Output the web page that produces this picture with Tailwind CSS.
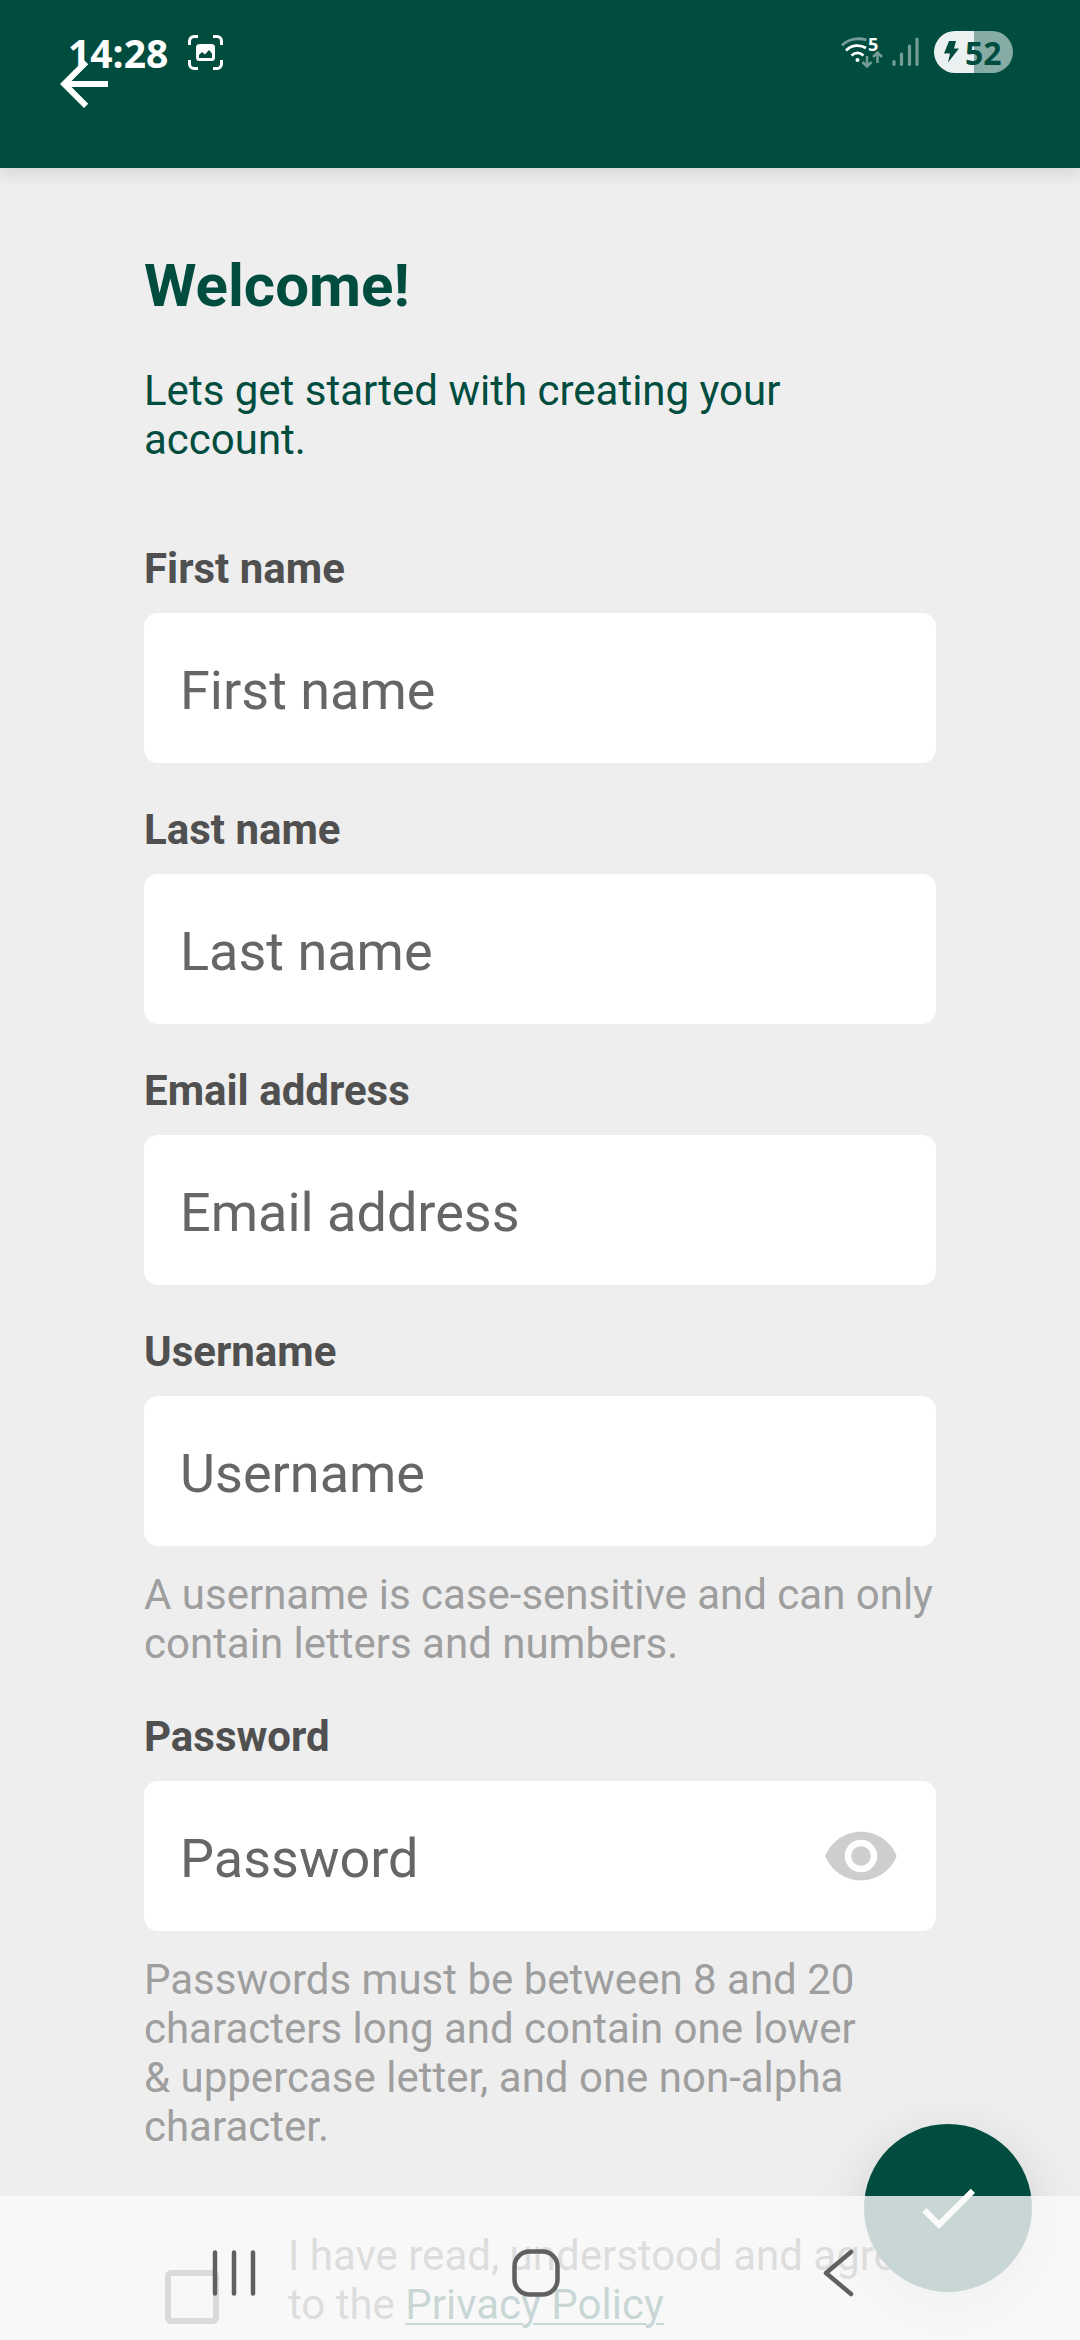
<!DOCTYPE html>
<html lang="en">
<head>
    <meta charset="UTF-8">
    <meta name="viewport" content="width=device-width, initial-scale=1.0">
    <title>Create account</title>
    <script src="https://cdn.jsdelivr.net/npm/@tailwindcss/browser@4"></script>
</head>
<body class="min-h-screen bg-[#eeeeee] font-[Roboto,sans-serif] text-[42px] leading-[49px] text-[#505050]">
    <!-- App bar -->
    <header class="relative flex h-[168px] items-start bg-[#004d40] px-12 pt-12 shadow-[0_4px_18px_rgba(0,0,0,0.12)]">
        <button type="button" aria-label="Back" class="text-white">
            <svg class="size-[72px]" viewBox="0 0 24 24" fill="currentColor"><path d="M20 11H7.83l5.59-5.59L12 4l-8 8 8 8 1.41-1.41L7.83 13H20z"/></svg>
        </button>

        <!-- System status bar, drawn over the app bar -->
        <div class="pointer-events-none absolute inset-x-0 top-0 flex h-[104px] items-center justify-between pl-[68px] pr-[67px] font-['Open_Sans',sans-serif] font-bold text-white">
            <div class="flex items-center gap-5">
                <span class="text-[39px]">14:28</span>
                <svg class="size-[35px]" viewBox="0 0 35 35" fill="none">
                    <path d="M1.5 10V6a4.500 4.500 0 0 1 4.500-4.500h4M25 1.500h4A4.500 4.500 0 0 1 33.500 6v4M33.500 25v4a4.500 4.500 0 0 1-4.500 4.500h-4M10 33.500H6A4.500 4.500 0 0 1 1.500 29v-4" stroke="currentColor" stroke-width="3"/>
                    <rect x="8" y="9" width="19" height="17" rx="3.500" fill="currentColor"/>
                    <path d="M11 23v-3l3-3 3 2.500 4-4.500 3 3.500V23z" fill="#004d40"/>
                </svg>
            </div>
            <div class="flex items-center">
                <!-- Wifi with traffic arrows -->
                <svg class="h-[32px] w-[42px] overflow-visible" viewBox="0 0 42 32" fill="none" stroke="currentColor" stroke-width="2.800">
                    <path d="M1 9.500C8 2.500 18 1.500 25.500 4" opacity=".45"/>
                    <path d="M5 14.500c6-6 14-6 20-2.500M10.500 19.500c4-3.500 8-3.500 12 0"/>
                    <circle cx="16.500" cy="24" r="2" fill="currentColor" stroke="none"/>
                    <path d="M26 20v10M21.500 26l4.500 4.500 4.500-4.500M36.500 27V17M32 21l4.500-4.500L41 21" opacity=".45" stroke-width="2.500"/>
                    <text x="27" y="14.500" font-size="18" font-weight="700" fill="currentColor" stroke="none">5</text>
                </svg>
                <!-- Signal -->
                <svg class="ml-[9px] h-[30px] w-[27px]" viewBox="0 0 27 30" stroke="currentColor" stroke-width="3.200" stroke-linecap="round" opacity=".45">
                    <path d="M2 24.500v3M9.500 17v10.500M17.500 9v18.500M25 2v25.500"/>
                </svg>
                <!-- Battery -->
                <div class="ml-[15px] flex h-[42px] w-[79px] items-center rounded-full bg-linear-to-r from-[#ebf1f0] from-51% to-[#86aca5] to-51% pl-[10px] text-[#004d40]">
                    <svg class="mr-1.5 h-[22px] w-[15px] shrink-0" viewBox="0 0 15 22" fill="currentColor"><path d="M5 0h7L10 7.500h5L4 21.500l2-9H0z"/></svg>
                    <span class="text-[32px]">52</span>
                </div>
            </div>
        </div>
    </header>

    <main class="px-36 pt-[83px]">
        <h1 class="text-[60px] leading-[70px] font-bold text-[#004d40]">Welcome!</h1>
        <p class="mt-[45px] text-[#004d40]">Lets get started with creating your account.</p>

        <form class="mt-20 flex flex-col gap-[42px]">
            <div class="flex flex-col gap-5">
                <label for="first-name" class="font-bold">First name</label>
                <input id="first-name" type="text" placeholder="First name" class="h-[150px] w-full rounded-[14px] bg-white px-9 pt-1 text-[54px] placeholder:text-[#666666]">
            </div>
            <div class="flex flex-col gap-5">
                <label for="last-name" class="font-bold">Last name</label>
                <input id="last-name" type="text" placeholder="Last name" class="h-[150px] w-full rounded-[14px] bg-white px-9 pt-1 text-[54px] placeholder:text-[#666666]">
            </div>
            <div class="flex flex-col gap-5">
                <label for="email" class="font-bold">Email address</label>
                <input id="email" type="email" placeholder="Email address" class="h-[150px] w-full rounded-[14px] bg-white px-9 pt-1 text-[54px] placeholder:text-[#666666]">
            </div>
            <div>
                <label for="username" class="block font-bold">Username</label>
                <input id="username" type="text" placeholder="Username" aria-describedby="username-hint" class="mt-5 h-[150px] w-full rounded-[14px] bg-white px-9 pt-1 text-[54px] placeholder:text-[#666666]">
                <p id="username-hint" class="mt-6 pb-0.5 text-[#9e9e9e]">A username is case-sensitive and can only contain letters and numbers.</p>
            </div>
            <div>
                <label for="password" class="block font-bold">Password</label>
                <div class="mt-5 flex h-[150px] items-center rounded-[14px] bg-white pr-9">
                    <input id="password" type="password" placeholder="Password" aria-describedby="password-hint" class="h-full min-w-0 flex-1 rounded-[14px] px-9 pt-1 text-[54px] placeholder:text-[#666666]">
                    <button type="button" aria-label="Show password" class="text-[#cecece]">
                        <svg class="size-[78px]" viewBox="0 0 24 24" fill="currentColor"><path d="M12 4.500C7 4.500 2.730 7.610 1 12c1.730 4.390 6 7.500 11 7.500s9.270-3.110 11-7.500c-1.730-4.390-6-7.500-11-7.500zM12 17c-2.760 0-5-2.240-5-5s2.240-5 5-5 5 2.240 5 5-2.240 5-5 5zm0-8c-1.660 0-3 1.340-3 3s1.340 3 3 3 3-1.340 3-3-1.340-3-3-3z"/></svg>
                    </button>
                </div>
                <p id="password-hint" class="mt-6 pr-14 text-[#9e9e9e]">Passwords must be between 8 and 20 characters long and contain one lower &amp; uppercase letter, and one non-alpha character.</p>
            </div>

            <div class="mt-[38px] flex items-start gap-[69px] pl-[21px]">
                <input id="terms" type="checkbox" class="mt-[39px] size-[54px] shrink-0 appearance-none rounded-[6px] border-[6px] border-[#5a5a5a]">
                <label for="terms" class="text-[#6a6a6a]">I have read, understood and agree to the <a href="#" class="text-[#004d40] underline decoration-2 underline-offset-4">Privacy Policy</a></label>
            </div>
        </form>
    </main>

    <!-- Submit -->
    <button type="button" aria-label="Continue" class="fixed right-12 bottom-12 flex size-[168px] items-center justify-center rounded-full bg-[#004d40] text-white shadow-[0_18px_54px_rgba(0,0,0,0.14)]">
        <svg class="size-[72px]" viewBox="0 0 24 24" fill="currentColor"><path d="M9 16.170L4.830 12l-1.420 1.410L9 19 21 7l-1.410-1.410z"/></svg>
    </button>

    <!-- System navigation -->
    <nav class="fixed inset-x-0 bottom-0 flex h-36 items-center justify-center bg-[#fafafa]/80 pt-2.5 pr-2 text-[#606060]">
        <button type="button" aria-label="Recent apps" class="flex w-[302px] justify-center">
            <svg class="size-12" viewBox="0 0 48 48" stroke="currentColor" stroke-width="4.500" stroke-linecap="round"><path d="M5 3.500v41M24 3.500v41M43 3.500v41"/></svg>
        </button>
        <button type="button" aria-label="Home" class="flex w-[302px] justify-center">
            <svg class="size-12" viewBox="0 0 48 48" fill="none" stroke="currentColor" stroke-width="4.500"><rect x="2.500" y="2.500" width="43" height="43" rx="15"/></svg>
        </button>
        <button type="button" aria-label="Back" class="flex w-[302px] justify-center">
            <svg class="size-12" viewBox="0 0 48 48" fill="none" stroke="currentColor" stroke-width="4.500" stroke-linecap="round" stroke-linejoin="round"><path d="M37 3L12 24l25 21"/></svg>
        </button>
    </nav>
</body>
</html>
